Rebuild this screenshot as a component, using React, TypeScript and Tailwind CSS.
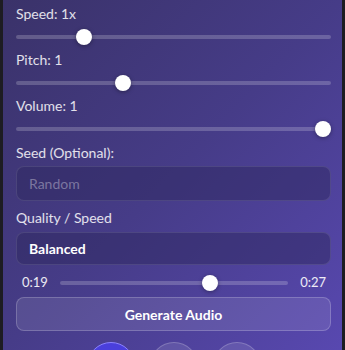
import type { ReactNode } from 'react';

function Slider({ value, className = '' }: { value: number; className?: string }) {
  return (
    <div className={`relative flex h-4 shrink-0 items-center ${className}`}>
      <div className="h-[4px] w-full rounded-full bg-white/20" />
      <div
        className="absolute top-0 h-4 w-4 rounded-full bg-white shadow-[0_1px_4px_rgba(0,0,0,0.35)]"
        style={{ left: `calc(${value * 100}% - ${value * 16}px)` }}
      />
    </div>
  );
}

function Label({ children, className = '' }: { children: ReactNode; className?: string }) {
  return <div className={`h-[18px] shrink-0 text-[14px] leading-[18px] text-white/85 ${className}`}>{children}</div>;
}

export default function App() {
  return (
    <div
      className="flex h-[350px] w-[345px] overflow-hidden bg-[#1d1c22] pl-[3px] pr-[3px]"
      style={{ fontFamily: 'Lato, "Noto Sans", sans-serif' }}
    >
      <div className="flex flex-1 flex-col bg-gradient-to-br from-[#3a3269] via-[#463c88] to-[#5848b0] pl-[13px] pr-[11px] pt-[5px]">
        <Label>Speed: 1x</Label>
        <Slider value={0.2} className="mt-[6px]" />
        <Label className="mt-[6px]">Pitch: 1</Label>
        <Slider value={0.33} className="mt-[6px]" />
        <Label className="mt-[6px]">Volume: 1</Label>
        <Slider value={1} className="mt-[6px]" />
        <Label className="mt-[7px]">Seed (Optional):</Label>
        <div className="mt-[4px] flex h-[35px] shrink-0 items-center rounded-lg border border-white/10 bg-[#2e2860]/50 px-[12px] text-[14px] text-white/35">
          Random
        </div>
        <Label className="mt-[8px]">Quality / Speed</Label>
        <div className="mt-[5px] flex h-[33px] shrink-0 items-center rounded-lg border border-white/10 bg-[#2e2860]/50 px-[12px] text-[14px] font-bold text-white">
          Balanced
        </div>
        <div className="mt-[10px] flex h-4 shrink-0 items-center gap-[12px] pl-[6px] pr-[5px] text-[13px] text-white/90">
          <span>0:19</span>
          <Slider value={0.67} className="flex-1" />
          <span>0:27</span>
        </div>
        <button
          type="button"
          className="mt-[6px] h-[34px] w-full shrink-0 rounded-lg border border-white/20 bg-white/10 text-[14px] font-bold text-white"
        >
          Generate Audio
        </button>
        <div className="mt-[11px] flex shrink-0 justify-center gap-[15px]">
          <div className="h-12 w-12 rounded-full border border-[#8b82ff] bg-[#4a3fdc]" />
          <div className="h-12 w-12 rounded-full border border-white/20 bg-white/10" />
          <div className="h-12 w-12 rounded-full border border-white/20 bg-white/10" />
        </div>
      </div>
    </div>
  );
}
